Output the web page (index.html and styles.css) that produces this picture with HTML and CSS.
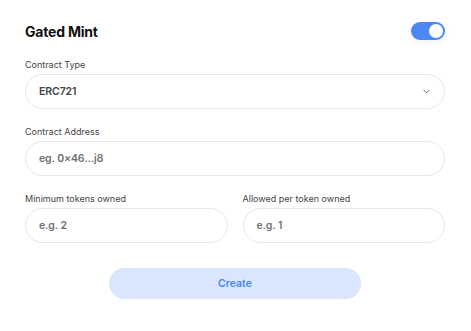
FILE: index.html
```html
<!DOCTYPE html>
<html lang="en">
<head>
    <meta charset="UTF-8">
    <meta name="viewport" content="width=device-width, initial-scale=1.0">
    <title>Gated Mint</title>
    <link rel="stylesheet" href="styles.css">
</head>
<body>
    <div class="panel">
        <div class="panel-header">
            <h2>Gated Mint</h2>
            <span class="toggle on"><span class="knob"></span></span>
        </div>

        <div class="field">
            <label>Contract Type</label>
            <div class="input select">
                <span class="value">ERC721</span>
                <svg class="chevron" viewBox="0 0 8 5" width="7" height="5">
                    <path d="M1 1l3 3 3-3" fill="none" stroke="#666" stroke-width="1.1" stroke-linecap="round" stroke-linejoin="round"/>
                </svg>
            </div>
        </div>

        <div class="field">
            <label>Contract Address</label>
            <div class="input"><span class="placeholder">eg. 0×46…j8</span></div>
        </div>

        <div class="field-row">
            <div class="field">
                <label>Minimum tokens owned</label>
                <div class="input"><span class="placeholder">e.g. 2</span></div>
            </div>
            <div class="field">
                <label>Allowed per token owned</label>
                <div class="input"><span class="placeholder">e.g. 1</span></div>
            </div>
        </div>

        <div class="actions">
            <button class="create-button">Create</button>
        </div>
    </div>
</body>
</html>
```

FILE: styles.css
```css
body {
    margin: 0;
    background: #fff;
    font-family: Inter, "Noto Sans", sans-serif;
    color: #222;
}
.panel {
    padding: 22px 26px 0 25px;
    display: flex;
    flex-direction: column;
    gap: 17px;
}
.panel-header {
    display: flex;
    align-items: center;
    justify-content: space-between;
    height: 18px;
    margin-bottom: 2px;
}
.panel-header h2 {
    margin: 0;
    font-size: 14px;
    font-weight: 700;
    color: #111;
    letter-spacing: -0.2px;
}
.toggle {
    width: 34px;
    height: 18px;
    border-radius: 9px;
    background: #4b87f5;
    display: flex;
    align-items: center;
    justify-content: flex-end;
    padding: 0 2px;
    box-sizing: border-box;
    box-shadow: 0 2px 8px rgba(0, 0, 0, 0.06);
}
.knob {
    width: 14px;
    height: 14px;
    border-radius: 50%;
    background: #fff;
}
.field {
    display: flex;
    flex-direction: column;
    gap: 3px;
}
.field label {
    font-size: 9px;
    line-height: 12px;
    color: #444;
}
.input {
    height: 35px;
    border: 1px solid #e6e6e6;
    border-radius: 18px;
    box-sizing: border-box;
    display: flex;
    align-items: center;
    padding: 0 13px;
    font-size: 10.5px;
    font-weight: 600;
    letter-spacing: -0.1px;
}
.select {
    justify-content: space-between;
    padding-right: 14px;
}
.value {
    color: #444;
}
.placeholder {
    color: #707070;
}
.field-row {
    display: grid;
    grid-template-columns: 1fr 1fr;
    gap: 15px;
}
.actions {
    display: flex;
    justify-content: center;
    padding-top: 8px;
}
.create-button {
    width: 252px;
    height: 31px;
    border: none;
    border-radius: 16px;
    background: #dae6fd;
    color: #4a86f7;
    font-family: inherit;
    font-size: 10.5px;
    font-weight: 600;
}
```
